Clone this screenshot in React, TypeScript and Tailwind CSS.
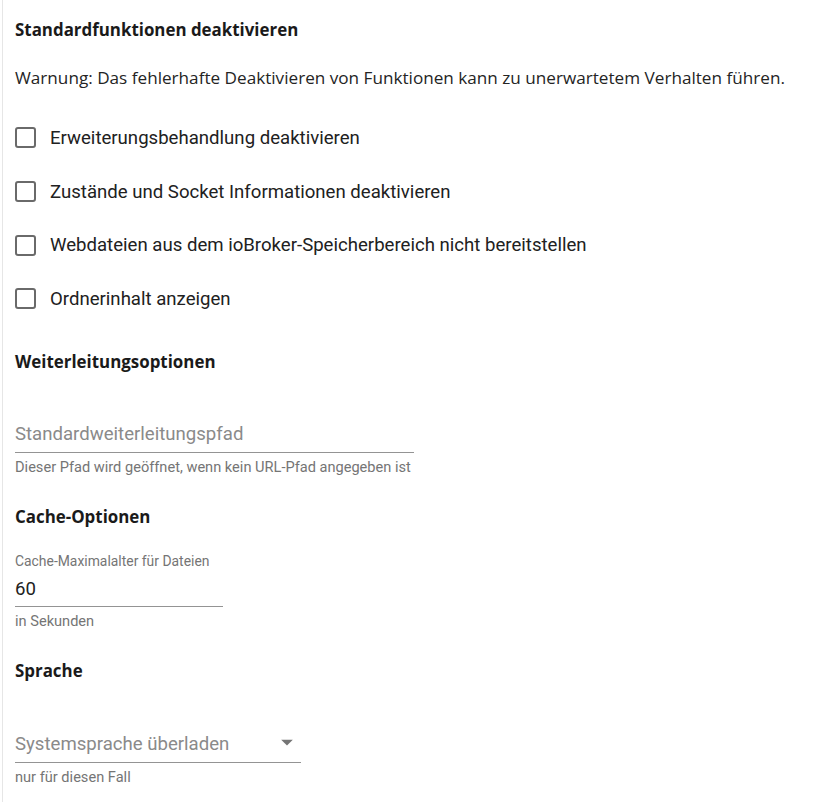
import React from "react";

const Checkbox = ({ label }: { label: string }) => (
  <div className="flex h-[53.7px] items-center">
    <div className="h-[21px] w-[21px] rounded-[3px] border-[2.5px] border-[#6a6a6a]" />
    <span className="ml-[14px] text-[18.6px] leading-[26px] text-[#212121] [font-family:Roboto,sans-serif]">{label}</span>
  </div>
);

const Heading = ({ children }: { children: React.ReactNode }) => (
  <div className="h-[24px] text-[16.9px] font-bold leading-[24px] text-[#1a1a1a] [font-family:'Open_Sans',sans-serif]">{children}</div>
);

export default function App() {
  return (
    <div className="min-h-[802px] bg-white pl-[2px]">
      <div className="min-h-[802px] border-l border-[#e6e6e6] pl-[12px] pt-[18px]">
        <Heading>Standardfunktionen deaktivieren</Heading>
        <div className="mt-[23px] h-[26px] text-[17.15px] leading-[26px] text-[#242424] [font-family:'Open_Sans',sans-serif]">
          Warnung: Das fehlerhafte Deaktivieren von Funktionen kann zu unerwartetem Verhalten führen.
        </div>
        <div className="mt-[20px]">
          <Checkbox label="Erweiterungsbehandlung deaktivieren" />
          <Checkbox label="Zustände und Socket Informationen deaktivieren" />
          <Checkbox label="Webdateien aus dem ioBroker-Speicherbereich nicht bereitstellen" />
          <Checkbox label="Ordnerinhalt anzeigen" />
        </div>
        <div className="mt-[24px]"><Heading>Weiterleitungsoptionen</Heading></div>

        <div className="mt-[49px] w-[399px]">
          <div className="h-[30px] border-b border-[#949494] text-[18.6px] leading-[22px] text-[#8a8a8a] [font-family:Roboto,sans-serif]">
            Standardweiterleitungspfad
          </div>
          <div className="mt-[5px] h-[18px] text-[14.6px] leading-[18px] text-[#757575] [font-family:Roboto,sans-serif]">
            Dieser Pfad wird geöffnet, wenn kein URL-Pfad angegeben ist
          </div>
        </div>

        <div className="mt-[29px]"><Heading>Cache-Optionen</Heading></div>

        <div className="mt-[23px] w-[208px]">
          <div className="h-[18px] text-[13.9px] leading-[18px] text-[#757575] [font-family:Roboto,sans-serif]">Cache-Maximalalter für Dateien</div>
          <div className="mt-[8px] h-[29px] border-b border-[#949494] text-[18.6px] leading-[22px] text-[#212121] [font-family:Roboto,sans-serif]">60</div>
          <div className="mt-[5px] h-[18px] text-[14.6px] leading-[18px] text-[#757575] [font-family:Roboto,sans-serif]">in Sekunden</div>
        </div>

        <div className="mt-[29px]"><Heading>Sprache</Heading></div>

        <div className="mt-[50px] w-[286px]">
          <div className="flex h-[30px] items-start justify-between border-b border-[#949494]">
            <span className="text-[18.6px] leading-[22px] text-[#8a8a8a] [font-family:Roboto,sans-serif]">Systemsprache überladen</span>
            <svg width="28" height="28" viewBox="0 0 24 24" className="-mt-[5px]">
              <path d="M7 10l5 5 5-5z" fill="#757575" />
            </svg>
          </div>
          <div className="mt-[5px] h-[18px] text-[14.6px] leading-[18px] text-[#757575] [font-family:Roboto,sans-serif]">nur für diesen Fall</div>
        </div>
      </div>
    </div>
  );
}
